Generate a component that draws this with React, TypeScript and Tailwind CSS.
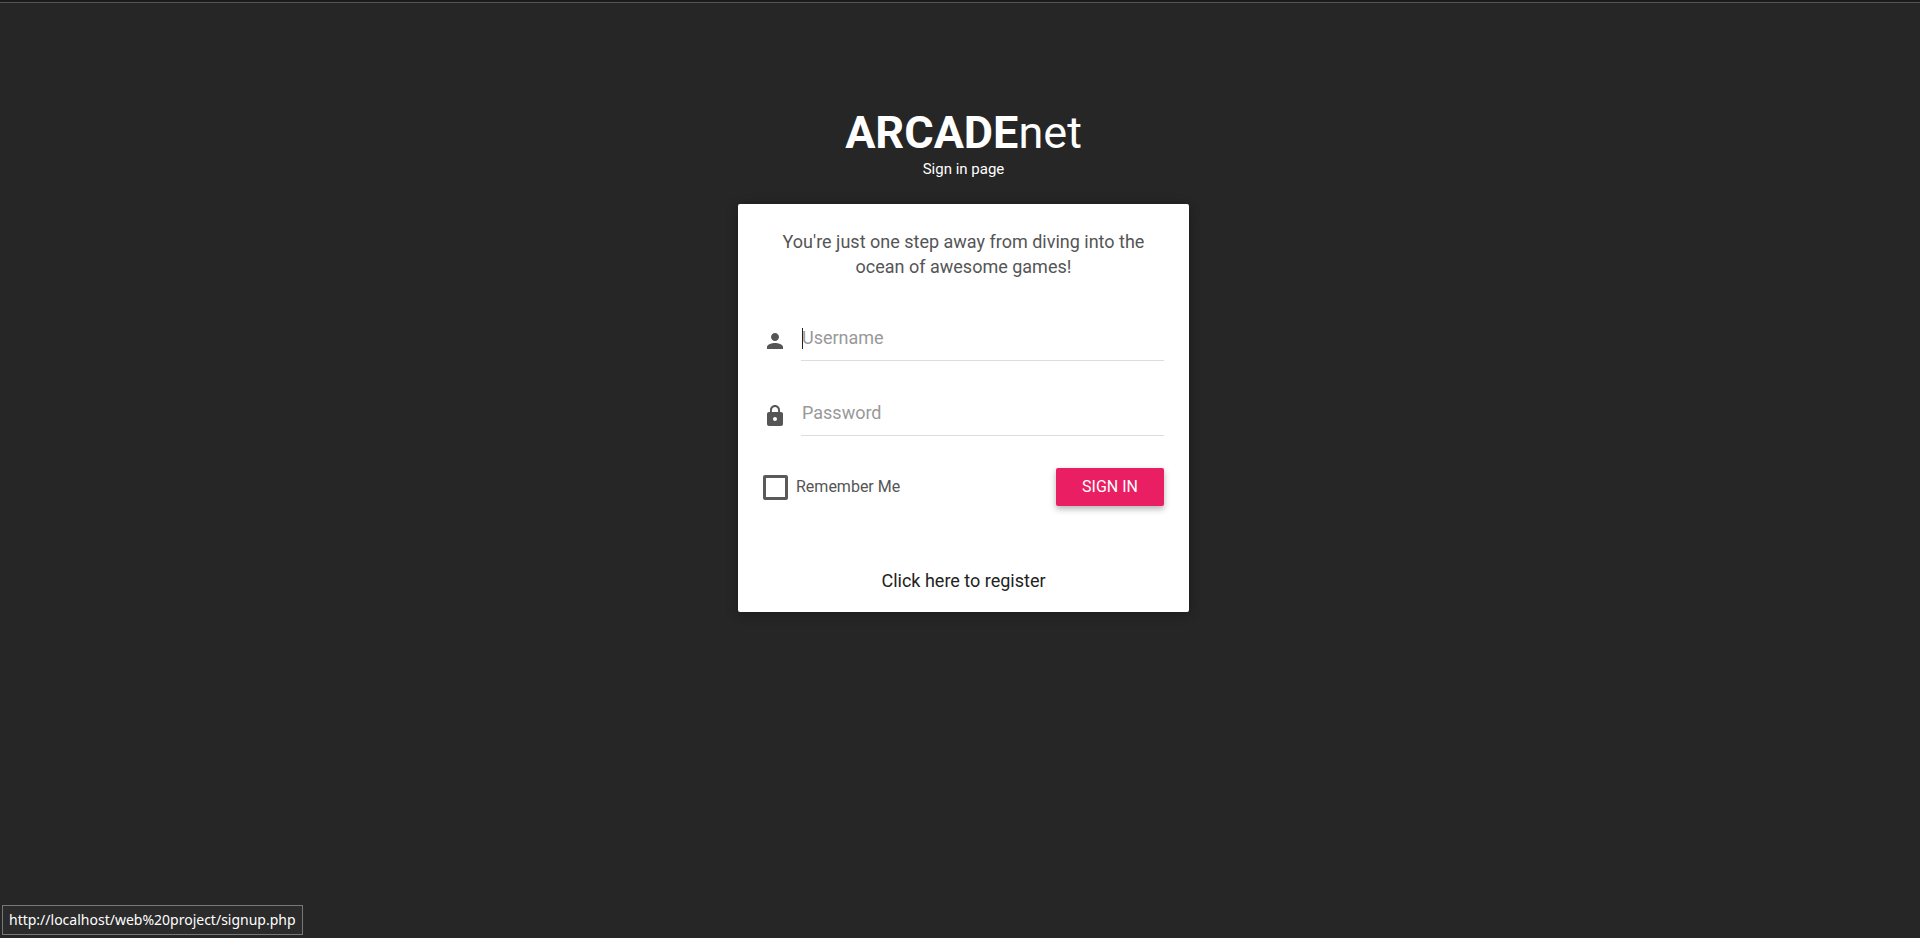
import { useState } from "react";
import type { ReactNode } from "react";

function PersonIcon() {
  return (
    <svg viewBox="0 0 24 24" className="size-6 fill-[#555]" aria-hidden="true">
      <path d="M12 12c2.21 0 4-1.79 4-4s-1.79-4-4-4-4 1.79-4 4 1.79 4 4 4zm0 2c-2.67 0-8 1.34-8 4v2h16v-2c0-2.66-5.33-4-8-4z" />
    </svg>
  );
}

function LockIcon() {
  return (
    <svg viewBox="0 0 24 24" className="size-6 fill-[#555]" aria-hidden="true">
      <path d="M18 8h-1V6c0-2.76-2.24-5-5-5S7 3.24 7 6v2H6c-1.1 0-2 .9-2 2v10c0 1.1.9 2 2 2h12c1.1 0 2-.9 2-2V10c0-1.1-.9-2-2-2zm-6 9c-1.1 0-2-.9-2-2s.9-2 2-2 2 .9 2 2-.9 2-2 2zm3.1-9H8.9V6c0-1.71 1.39-3.1 3.1-3.1 1.71 0 3.1 1.39 3.1 3.1v2z" />
    </svg>
  );
}

type FieldProps = {
  id: string;
  label: string;
  type: string;
  icon: ReactNode;
  showCaret?: boolean;
};

function Field({ id, label, type, icon, showCaret = false }: FieldProps) {
  return (
    <div className="flex items-center gap-3.5">
      <label htmlFor={id} aria-label={label} className="pt-1.5">
        {icon}
      </label>
      <div className="relative flex-1 border-b border-[#ddd]">
        <input
          id={id}
          name={id}
          type={type}
          placeholder={label}
          className="block h-[45px] w-full bg-transparent px-px text-lg text-[#555] outline-none placeholder:text-[#999]"
        />
        {showCaret && <span className="absolute top-[13px] left-px h-[21px] w-px bg-[#222]" />}
      </div>
    </div>
  );
}

export default function App() {
  const [remember, setRemember] = useState(false);

  return (
    <div className="flex min-h-screen flex-col border-t-2 border-[#1b1b1b] bg-[#262626] font-['Roboto',sans-serif]">
      <div className="h-px bg-[#555]" />
      <div className="pt-[103px] pl-[7px]">
        <main className="mx-auto w-full max-w-[451px]">
          <header className="text-center text-white">
            <h1 className="text-[45px] leading-[54px]">
              <b>ARCADE</b>net
            </h1>
            <p className="text-[15px] leading-[18px]">Sign in page</p>
          </header>

          <form
            className="mt-[26px] rounded-xs bg-white px-[25px] pt-[25px] pb-[19px] shadow-[0_2px_12px_rgba(0,0,0,0.3)]"
            onSubmit={(e) => e.preventDefault()}
          >
            <p className="px-2 text-center text-lg leading-[25px] text-[#555]">
              You're just one step away from diving into the ocean of awesome games!
            </p>

            <div className="mt-9 flex flex-col gap-[29px]">
              <Field id="username" label="Username" type="text" icon={<PersonIcon />} showCaret />
              <Field id="password" label="Password" type="password" icon={<LockIcon />} />
            </div>

            <div className="mt-8 flex items-center justify-between">
              <label className="flex items-center gap-2 text-base text-[#555]">
                <input
                  type="checkbox"
                  checked={remember}
                  onChange={(e) => setRemember(e.target.checked)}
                  className="size-[25px] appearance-none rounded-xs border-3 border-[#5a5a5a] checked:bg-[#5a5a5a]"
                />
                Remember Me
              </label>
              <button
                type="submit"
                className="h-[38px] rounded-xs bg-[#e91e63] px-[26px] text-base text-white shadow-[0_3px_6px_rgba(0,0,0,0.3)]"
              >
                SIGN IN
              </button>
            </div>

            <p className="mt-[62px] text-center text-lg leading-[25px]">
              <a href="signup.php" className="text-[#222]">
                Click here to register
              </a>
            </p>
          </form>
        </main>
      </div>

      <div className="fixed bottom-[3px] left-0.5 border border-[#777] bg-[#2b2b2b] px-1.5 font-['Noto_Sans',sans-serif] text-sm leading-7 text-white">
        http://localhost/web%20project/signup.php
      </div>
    </div>
  );
}
